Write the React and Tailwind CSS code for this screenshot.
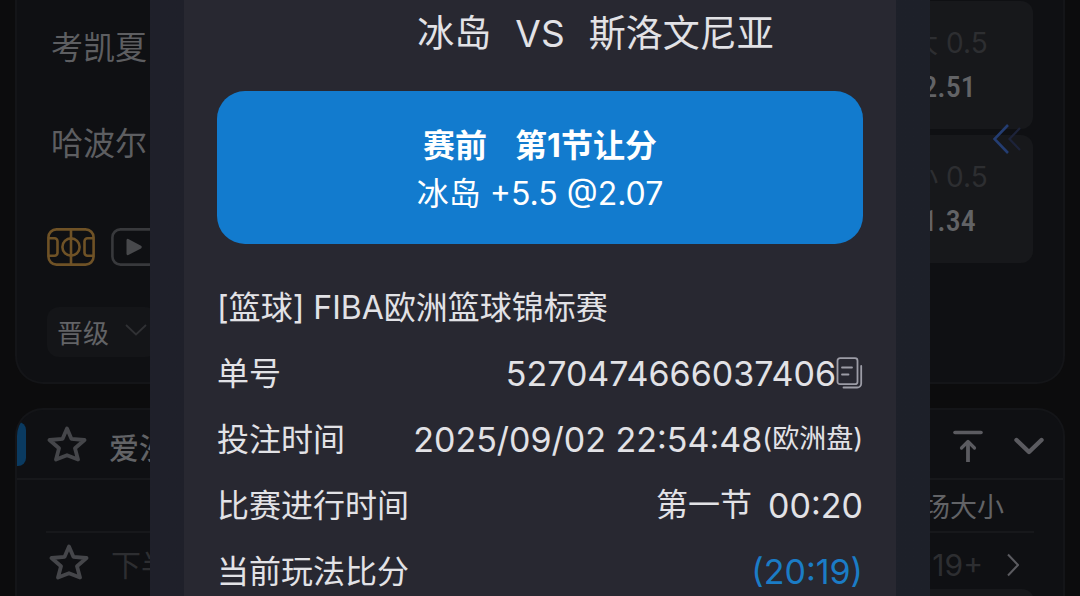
import React from "react";

function CourtIcon() {
  return (
    <svg className="h-[38px] w-12" viewBox="0 0 48 38" fill="none" stroke="#6f5226" strokeWidth="2.6" aria-hidden="true">
      <rect x="1.4" y="1.4" width="45.2" height="35.2" rx="8" />
      <path d="M24 1.4V36.6" />
      <circle cx="24" cy="19" r="8.6" />
      <path d="M2 10.2H7.5a3 3 0 0 1 3 3V24.8a3 3 0 0 1-3 3H2" />
      <path d="M46 10.2H40.5a3 3 0 0 0-3 3V24.8a3 3 0 0 0 3 3H46" />
    </svg>
  );
}

function PlayIcon() {
  return (
    <svg className="h-[38px] w-12" viewBox="0 0 48 38" fill="none" aria-hidden="true">
      <rect x="1.4" y="1.4" width="45.2" height="35.2" rx="8" stroke="#38393c" strokeWidth="2.6" />
      <path d="M15.5 12v14a1.2 1.2 0 0 0 1.8 1L30 20.4a1.5 1.5 0 0 0 0-2.6L17.3 11a1.2 1.2 0 0 0-1.8 1z" fill="#48494c" />
    </svg>
  );
}

function StarIcon() {
  return (
    <svg className="h-10 w-10" viewBox="0 0 40 40" fill="none" stroke="#45464a" strokeWidth="3.8" strokeLinejoin="round" aria-hidden="true">
      <path d="M20 4.5L24.4 14.8L37.5 16L28 24.2L31 35.5L20 31.2L9 35.5L12 24.2L2.5 16L15.6 14.8Z" />
    </svg>
  );
}

function ToTopIcon() {
  return (
    <svg className="h-8 w-[30px]" viewBox="0 0 30 32" fill="none" stroke="#5b5b60" strokeLinecap="round" strokeLinejoin="round" aria-hidden="true">
      <path d="M2 2.5H28" strokeWidth="3.6" />
      <path d="M15 32V12" strokeWidth="3.8" strokeLinecap="butt" />
      <path d="M8.5 18L15 11.5L21.5 18" strokeWidth="3.2" />
    </svg>
  );
}

function ChevronDown() {
  return (
    <svg className="h-5 w-[30px]" viewBox="0 0 30 20" fill="none" stroke="#5b5b60" strokeWidth="4.4" strokeLinecap="round" strokeLinejoin="round" aria-hidden="true">
      <path d="M2.5 4L15 16L27.5 4" />
    </svg>
  );
}

function CopyIcon() {
  return (
    <svg className="h-8 w-[27px]" viewBox="0 0 27 32" fill="none" stroke="#9c9ca6" strokeWidth="1.8" strokeLinecap="round" aria-hidden="true">
      <rect x="1.5" y="1.2" width="20" height="26" rx="2.5" />
      <path d="M6 10.5H16M6 17.5H12.5" />
      <path d="M25.2 9V26.5a4 4 0 0 1-4 4H7.5" />
    </svg>
  );
}

function OddsTile({ label, value }) {
  return (
    <button type="button" className="flex h-32 w-full flex-col items-center gap-2 rounded-xl bg-[#17181b] pt-6">
      <span className="text-[28px] leading-9 text-[#2d2e31]">{label}</span>
      <span className="font-['Liberation_Sans_Narrow','Roboto_Condensed',sans-serif] text-[30px] leading-9 font-medium text-[#626366]">{value}</span>
    </button>
  );
}

function MatchCard() {
  return (
    <section className="relative flex justify-between rounded-b-[28px] border-2 border-t-0 border-[#141518] bg-[#0f1013] px-[30px] pb-[25px]">
      <div>
        <div className="pl-1 text-[32px] text-[#5d5e61]">
          <p className="flex h-24 items-center">考凯夏</p>
          <p className="flex h-24 items-center">哈波尔</p>
        </div>
        <div className="mt-9 flex gap-4">
          <button type="button" aria-label="球场"><CourtIcon /></button>
          <button type="button" aria-label="播放"><PlayIcon /></button>
        </div>
        <button type="button" className="mt-[41px] flex h-[50px] items-center gap-4 rounded-xl bg-[#141518] px-[10px] text-[26px] text-[#626366]">
          <span className="pt-[2px]">晋级</span>
          <svg className="mb-1 h-3 w-[22px]" viewBox="0 0 22 12" fill="none" stroke="#303134" strokeWidth="1.8" aria-hidden="true">
            <path d="M1 1L11 10.5L21 1" />
          </svg>
        </button>
      </div>
      <div className="flex w-[168px] flex-col gap-[6px] pt-px">
        <OddsTile label="大 0.5" value="2.51" />
        <OddsTile label="小 0.5" value="1.34" />
      </div>
      <svg className="absolute top-[124px] right-[42px] h-[30px] w-7" viewBox="0 0 28 30" fill="none" aria-hidden="true">
        <path d="M15 1L1.5 15L15 29" stroke="#243d72" strokeWidth="2.6" />
        <path d="M27 4L16.5 15L27 26" stroke="#1d233a" strokeWidth="2.2" />
      </svg>
    </section>
  );
}

function LeagueCard() {
  return (
    <section className="mt-6 overflow-hidden rounded-t-[28px] border-2 border-b-0 border-[#141518] bg-[#0f1013]">
      <header className="flex h-[70px] items-center border-b-2 border-[#17181b] pr-[19px]">
        <span className="h-11 w-[9px] rounded-r-lg bg-[#0a3a60]" />
        <button type="button" aria-label="收藏联赛" className="ml-[21px]"><StarIcon /></button>
        <h2 className="ml-[22px] pt-2 text-[30px] font-medium text-[#626366]">爱沙尼亚</h2>
        <div className="ml-auto flex items-center gap-[31px] pt-1">
          <button type="button" aria-label="置顶"><ToTopIcon /></button>
          <button type="button" aria-label="展开"><ChevronDown /></button>
        </div>
      </header>
      <div className="mx-[29px] flex h-[53px] items-center justify-end border-b-2 border-[#17181b] pt-[6px]">
        <span className="w-[168px] text-center text-[27px] text-[#626366]">全场大小</span>
      </div>
      <div className="mx-[29px] flex h-14 items-center pt-2 text-[#2d2e31]">
        <button type="button" aria-label="收藏比赛" className="ml-[3px] pb-[6px]"><StarIcon /></button>
        <span className="ml-[22px] text-[30px]">下半场</span>
        <a href="#more" className="mr-[15px] ml-auto flex items-center gap-6 text-[30px]">
          19+
          <svg className="h-6 w-3" viewBox="0 0 12 24" fill="none" stroke="#5b5b60" strokeWidth="2" aria-hidden="true">
            <path d="M1 1.5L11 12L1 22.5" />
          </svg>
        </a>
      </div>
      <div className="mx-[29px] flex justify-end">
        <div className="h-32 w-[168px] rounded-xl bg-[#17181b]" />
      </div>
    </section>
  );
}

function DetailRow({ label, children }) {
  return (
    <div className="flex h-[66px] items-center justify-between">
      <dt>{label}</dt>
      <dd className="flex items-center pb-[2px] text-[34px]">{children}</dd>
    </div>
  );
}

function BetDialog() {
  return (
    <div
      role="dialog"
      aria-labelledby="bet-title"
      className="absolute inset-y-0 left-1/2 w-[780px] max-w-full -translate-x-1/2 overflow-hidden bg-linear-to-r from-[#1f202a] to-[#1d2029] px-[34px]"
    >
      <div className="min-h-full bg-[#282831] px-[33px] text-[32px] text-[#e2e2e6]">
        <h1 id="bet-title" className="grid h-[91px] grid-cols-[1fr_auto_1fr] gap-6 pt-[9px] text-[37px] leading-[50px]">
          <span className="text-right">冰岛</span>
          <span>VS</span>
          <span>斯洛文尼亚</span>
        </h1>
        <div className="flex h-[153px] flex-col items-center justify-center rounded-[28px] bg-[#127bce] pt-1 text-[32px] leading-[48px] text-white">
          <p className="flex gap-7 font-bold">
            <span>赛前</span>
            <span>第1节让分</span>
          </p>
          <p>冰岛 +5.5 @2.07</p>
        </div>
        <p className="mt-[31px] flex h-[66px] items-center whitespace-nowrap">[篮球] FIBA欧洲篮球锦标赛</p>
        <dl className="whitespace-nowrap">
          <DetailRow label="单号">
            5270474666037406
            <button type="button" aria-label="复制单号"><CopyIcon /></button>
          </DetailRow>
          <DetailRow label="投注时间">
            2025/09/02 22:54:48<span className="text-[27px]">(欧洲盘)</span>
          </DetailRow>
          <DetailRow label="比赛进行时间">
            <span className="mr-4 text-[32px]">第一节</span>00:20
          </DetailRow>
          <DetailRow label="当前玩法比分">
            <span className="text-[#1b7cc6]">(20:19)</span>
          </DetailRow>
        </dl>
      </div>
    </div>
  );
}

export default function App() {
  return (
    <main className="relative h-screen overflow-hidden bg-[#0c0c0d] px-[15px] font-['Inter','Noto_Sans_CJK_SC',sans-serif]">
      <MatchCard />
      <LeagueCard />
      <BetDialog />
    </main>
  );
}
